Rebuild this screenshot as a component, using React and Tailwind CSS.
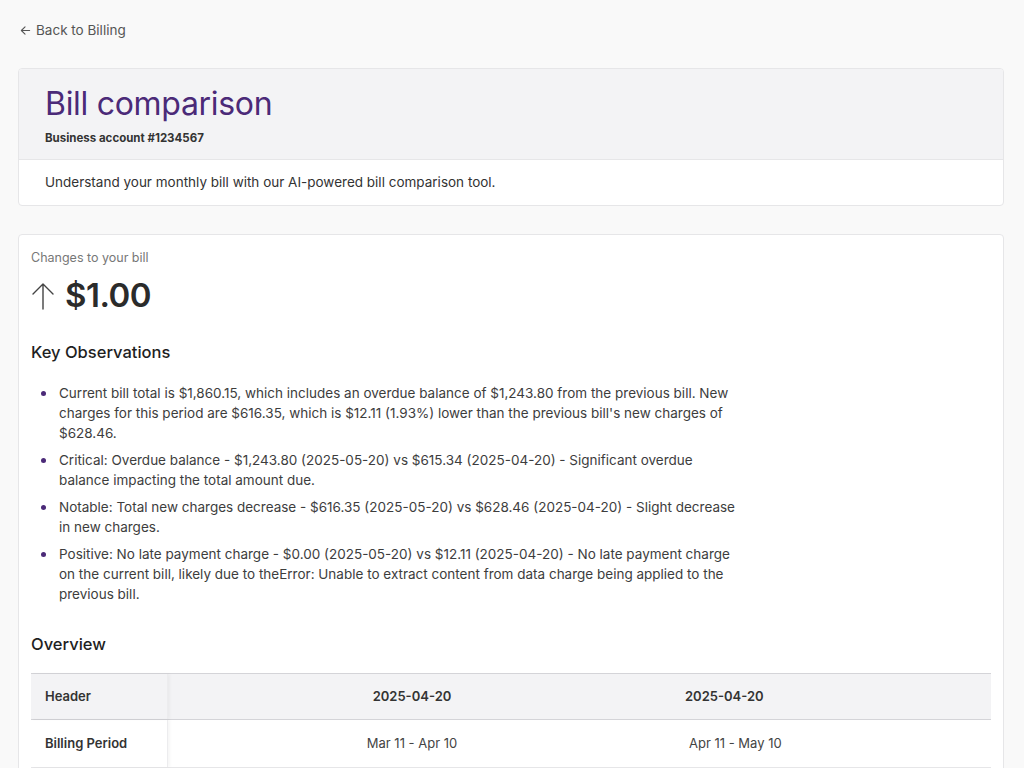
import React from 'react';

const observations = [
    "Current bill total is $1,860.15, which includes an overdue balance of $1,243.80 from the previous bill. New charges for this period are $616.35, which is $12.11 (1.93%) lower than the previous bill's new charges of $628.46.",
    "Critical: Overdue balance - $1,243.80 (2025-05-20) vs $615.34 (2025-04-20) - Significant overdue balance impacting the total amount due.",
    "Notable: Total new charges decrease - $616.35 (2025-05-20) vs $628.46 (2025-04-20) - Slight decrease in new charges.",
    "Positive: No late payment charge - $0.00 (2025-05-20) vs $12.11 (2025-04-20) - No late payment charge on the current bill, likely due to theError: Unable to extract content from data charge being applied to the previous bill.",
];

const ArrowLeft = () => (
    <svg width="11" height="11" viewBox="0 0 12 12" fill="none" stroke="currentColor" strokeWidth="1.2" strokeLinecap="round" strokeLinejoin="round">
        <path d="M10.5 6H1.5M5.5 2L1.5 6l4 4" />
    </svg>
);

const ArrowUp = () => (
    <svg width="24" height="30" viewBox="0 0 24 30" fill="none" stroke="#444" strokeWidth="1.4" strokeLinecap="round" strokeLinejoin="round">
        <path d="M12 28V3M2 13L12 3l10 10" />
    </svg>
);

const App = () => {
    return (
        <div className="min-h-screen bg-[#f9f9f9] pl-[18px] pr-[20px] pt-[18px] pb-10 font-['Inter',sans-serif] text-[#3b3b3b]">
            {/* Back link */}
            <a href="#" className="inline-flex items-center gap-[5px] ml-[2px] text-[13.5px] text-[#555]">
                <ArrowLeft />
                Back to Billing
            </a>

            {/* Header card */}
            <div className="mt-[26px] bg-white border border-[#e6e6e8] rounded-[4px] overflow-hidden">
                <div className="bg-[#f3f3f5] border-b border-[#e6e6e8] px-[26px] pt-[16px] pb-[12px]">
                    <h1 className="text-[32px] leading-[38px] font-normal tracking-[-0.3px] text-[#4b2a78]">Bill comparison</h1>
                    <p className="mt-[7px] text-[11.5px] font-bold text-[#333]">Business account #1234567</p>
                </div>
                <div className="px-[26px] py-[12px] text-[13.5px] text-[#333]">
                    Understand your monthly bill with our AI-powered bill comparison tool.
                </div>
            </div>

            {/* Comparison card */}
            <div className="mt-[28px] bg-white border border-[#e6e6e8] rounded-[4px] px-[12px] pt-[14px] pb-6">
                <p className="text-[12.5px] text-[#777]">Changes to your bill</p>
                <div className="mt-[4px] flex items-center gap-[10px]">
                    <ArrowUp />
                    <span className="text-[33px] font-semibold tracking-[-0.5px] text-[#2b2b2b]">$1.00</span>
                </div>

                <h2 className="mt-[19px] text-[16.5px] font-medium text-[#1f1f1f]">Key Observations</h2>

                <ul className="mt-[18px] ml-[10px] w-[698px] flex flex-col gap-[7px]">
                    {observations.map((o, i) => (
                        <li key={i} className="flex gap-[13px] text-[13.5px] leading-[20px] text-[#3d3d3d]">
                            <span className="mt-[8px] w-[5px] h-[5px] shrink-0 rounded-full bg-[#4b2a78]" />
                            <span>{o}</span>
                        </li>
                    ))}
                </ul>

                <h2 className="mt-[28px] text-[16.5px] font-medium text-[#1f1f1f]">Overview</h2>

                {/* Table */}
                <div className="mt-[17px] border-t border-[#d4d4d8]">
                    <div className="flex bg-[#f3f3f5] border-b border-[#d4d4d8] h-[46px] items-center text-[13px] font-semibold text-[#333]">
                        <div className="w-[137px] h-full flex items-center pl-[14px] border-r border-[#ececee] shadow-[2px_0_3px_rgba(0,0,0,0.04)]">Header</div>
                        <div className="w-[488px] text-center">2025-04-20</div>
                        <div className="pl-[29px]">2025-04-20</div>
                    </div>
                    <div className="flex h-[48px] items-center border-b border-[#e6e6e8] text-[13px]">
                        <div className="w-[137px] h-full flex items-center pl-[14px] font-semibold text-[#333] border-r border-[#ececee] shadow-[2px_0_3px_rgba(0,0,0,0.04)]">Billing Period</div>
                        <div className="w-[488px] text-center text-[#444]">Mar 11 - Apr 10</div>
                        <div className="pl-[33px] text-[#444]">Apr 11 - May 10</div>
                    </div>
                </div>
            </div>
        </div>
    );
};

export default App;
